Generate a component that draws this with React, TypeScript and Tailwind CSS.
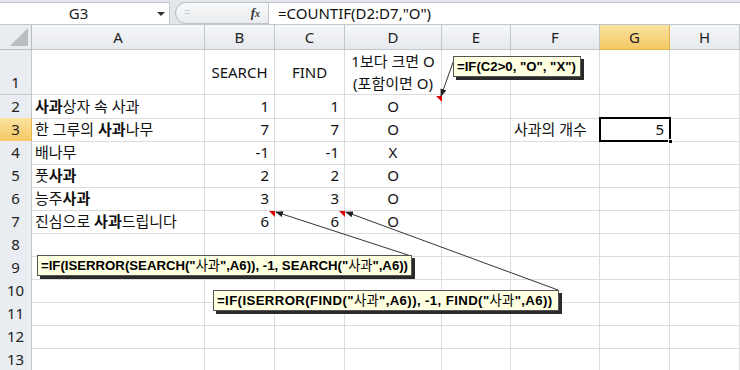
import React from "react";

const font = "font-['Noto_Sans','Noto_Sans_CJK_KR',sans-serif]";
const noteFont = "font-['Liberation_Sans','Noto_Sans_CJK_KR',sans-serif]";

const cols = ["A", "B", "C", "D", "E", "F", "G", "H"];

type Row = {
  a?: React.ReactNode;
  b?: string;
  c?: string;
  d?: string;
};

const B = ({ children }: { children: React.ReactNode }) => <b className="font-bold">{children}</b>;

const rows: Row[] = [
  { a: <><B>사과</B>상자 속 사과</>, b: "1", c: "1", d: "O" },
  { a: <>한 그루의 <B>사과</B>나무</>, b: "7", c: "7", d: "O" },
  { a: <>배나무</>, b: "-1", c: "-1", d: "X" },
  { a: <>풋<B>사과</B></>, b: "2", c: "2", d: "O" },
  { a: <>능주<B>사과</B></>, b: "3", c: "3", d: "O" },
  { a: <>진심으로 <B>사과</B>드립니다</>, b: "6", c: "6", d: "O" },
  {}, {}, {}, {}, {}, {},
];

const gridCols = "grid grid-cols-[32px_173px_70px_70px_97px_69px_89px_70px_70px]";
const cell = "border-r border-b border-[#dcdcdc] flex items-center text-[15px] text-[#111] px-[3px] whitespace-pre overflow-visible";

const Note = ({ children, className }: { children: React.ReactNode; className: string }) => (
  <div
    className={`absolute h-[21px] flex items-center px-[3px] bg-[#ffffe1] border border-[#555] shadow-[3px_3px_0_#2a2a2a] text-[13.2px] font-bold text-black whitespace-pre ${noteFont} ${className}`}
  >
    <span>{children}</span>
  </div>
);

const K = ({ children }: { children: React.ReactNode }) => <span className="font-normal">{children}</span>;

export default function App() {
  return (
    <div className={`relative w-[740px] h-[370px] overflow-hidden bg-white ${font}`}>
      {/* formula bar */}
      <div className="flex h-[25px] pt-[2px] bg-[#e3e6ea] border-b border-[#c3c7cc]">
        <div className="w-[170px] bg-white border-r border-t border-[#c3c7cc] flex items-center">
          <span className="w-[157px] text-center text-[15px] text-[#222]">G3</span>
          <span className="w-0 h-0 border-l-[4px] border-r-[4px] border-t-[4px] border-l-transparent border-r-transparent border-t-[#333]" />
        </div>
        <div className="w-[98px] flex pl-[5px]">
          <div className="flex-1 flex items-center justify-between rounded-l-full border border-r-0 border-[#bfc3c8] bg-gradient-to-b from-[#f8f9fa] to-[#e9ecef] pl-[8px] pr-[8px]">
            <span className="text-[12px] text-[#c7cacd]">=</span>
            <span className="font-['Liberation_Serif',serif] italic font-bold text-[13px] text-[#333]">
              f<span className="text-[10px]">x</span>
            </span>
          </div>
        </div>
        <div className="flex-1 bg-white border-l border-t border-[#c3c7cc] flex items-center pl-[9px] text-[15px] text-[#111]">
          =COUNTIF(D2:D7,"O")
        </div>
      </div>

      {/* column headers */}
      <div className={`${gridCols} h-[25px]`}>
        <div className="border-r border-b border-[#b9bdc2] bg-[#e9ecf0] relative">
          <div className="absolute right-[3px] bottom-[3px] w-0 h-0 border-l-[18px] border-l-transparent border-b-[18px] border-b-[#b9bcc0]" />
        </div>
        {cols.map((c) =>
          c === "G" ? (
            <div key={c} className="border-r border-b border-[#e2b44c] bg-gradient-to-b from-[#fbe3a0] to-[#f4c863] flex items-center justify-center text-[15px] text-[#222]">
              {c}
            </div>
          ) : (
            <div key={c} className="border-r border-b border-[#c3c7cc] bg-gradient-to-b from-[#f6f7f9] to-[#e6e9ed] flex items-center justify-center text-[15px] text-[#222]">
              {c}
            </div>
          )
        )}
      </div>

      {/* row 1 */}
      <div className={`${gridCols} h-[45px]`}>
        <div className="border-r border-b border-[#c3c7cc] bg-[#e9ecf0] flex items-end justify-center pb-[1px] text-[15px] text-[#222]">1</div>
        <div className={cell} />
        <div className={`${cell} justify-center`}>SEARCH</div>
        <div className={`${cell} justify-center`}>FIND</div>
        <div className={`${cell} flex-col justify-center leading-[22px]`}>
          <span>1보다 크면 O</span>
          <span>(포함이면 O)</span>
        </div>
        <div className={cell} />
        <div className={cell} />
        <div className={cell} />
        <div className={cell} />
      </div>

      {/* rows 2..13 */}
      {rows.map((r, i) => {
        const n = i + 2;
        const sel = n === 3;
        return (
          <div key={n} className={`${gridCols} h-[23px]`}>
            <div
              className={`border-r border-b flex items-center justify-center text-[15px] text-[#222] ${
                sel ? "bg-gradient-to-b from-[#fbe3a0] to-[#f4c863] border-[#e2b44c]" : "bg-[#e9ecf0] border-[#c3c7cc]"
              }`}
            >
              {n}
            </div>
            <div className={cell}><span>{r.a}</span></div>
            <div className={`${cell} justify-end pr-[5px]`}>{r.b}</div>
            <div className={`${cell} justify-end pr-[5px]`}>{r.c}</div>
            <div className={`${cell} justify-center`}>{r.d}</div>
            <div className={cell} />
            <div className={cell}>{n === 3 ? "사과의 개수" : ""}</div>
            <div className={`${cell} justify-end pr-[5px]`}>{n === 3 ? "5" : ""}</div>
            <div className={cell} />
          </div>
        );
      })}

      {/* selection on G3 */}
      <div className="absolute left-[599px] top-[117px] w-[72px] h-[25px] border-2 border-black pointer-events-none" />
      <div className="absolute left-[668px] top-[139px] w-[5px] h-[5px] bg-black border border-white" />

      {/* arrows and comment indicators */}
      <svg className="absolute left-0 top-0" width="740" height="370">
        <defs>
          <marker id="ah" markerWidth="8" markerHeight="6" refX="7" refY="3" orient="auto" markerUnits="userSpaceOnUse">
            <path d="M0,0 L8,3 L0,6 Z" fill="#222" />
          </marker>
        </defs>
        <polygon points="436,96 442,96 442,102" fill="#e00000" />
        <polygon points="269,211 275,211 275,217" fill="#e00000" />
        <polygon points="339,211 345,211 345,217" fill="#e00000" />
        <line x1="455" y1="57" x2="441" y2="96" stroke="#333" strokeWidth="1" markerEnd="url(#ah)" />
        <line x1="411" y1="256" x2="276" y2="212" stroke="#333" strokeWidth="1" markerEnd="url(#ah)" />
        <line x1="558" y1="290" x2="346" y2="212" stroke="#333" strokeWidth="1" markerEnd="url(#ah)" />
      </svg>

      {/* comments */}
      <Note className="left-[453px] top-[56px] w-[128px]">=IF(C2&gt;0, "O", "X")</Note>
      <Note className="left-[37px] top-[255px] w-[375px]">
        =IF(ISERROR(SEARCH("<K>사과</K>",A6)), -1, SEARCH("<K>사과</K>",A6))
      </Note>
      <Note className="left-[213px] top-[290px] w-[346px] tracking-[0.4px]">
        =IF(ISERROR(FIND("<K>사과</K>",A6)), -1, FIND("<K>사과</K>",A6))
      </Note>
    </div>
  );
}
